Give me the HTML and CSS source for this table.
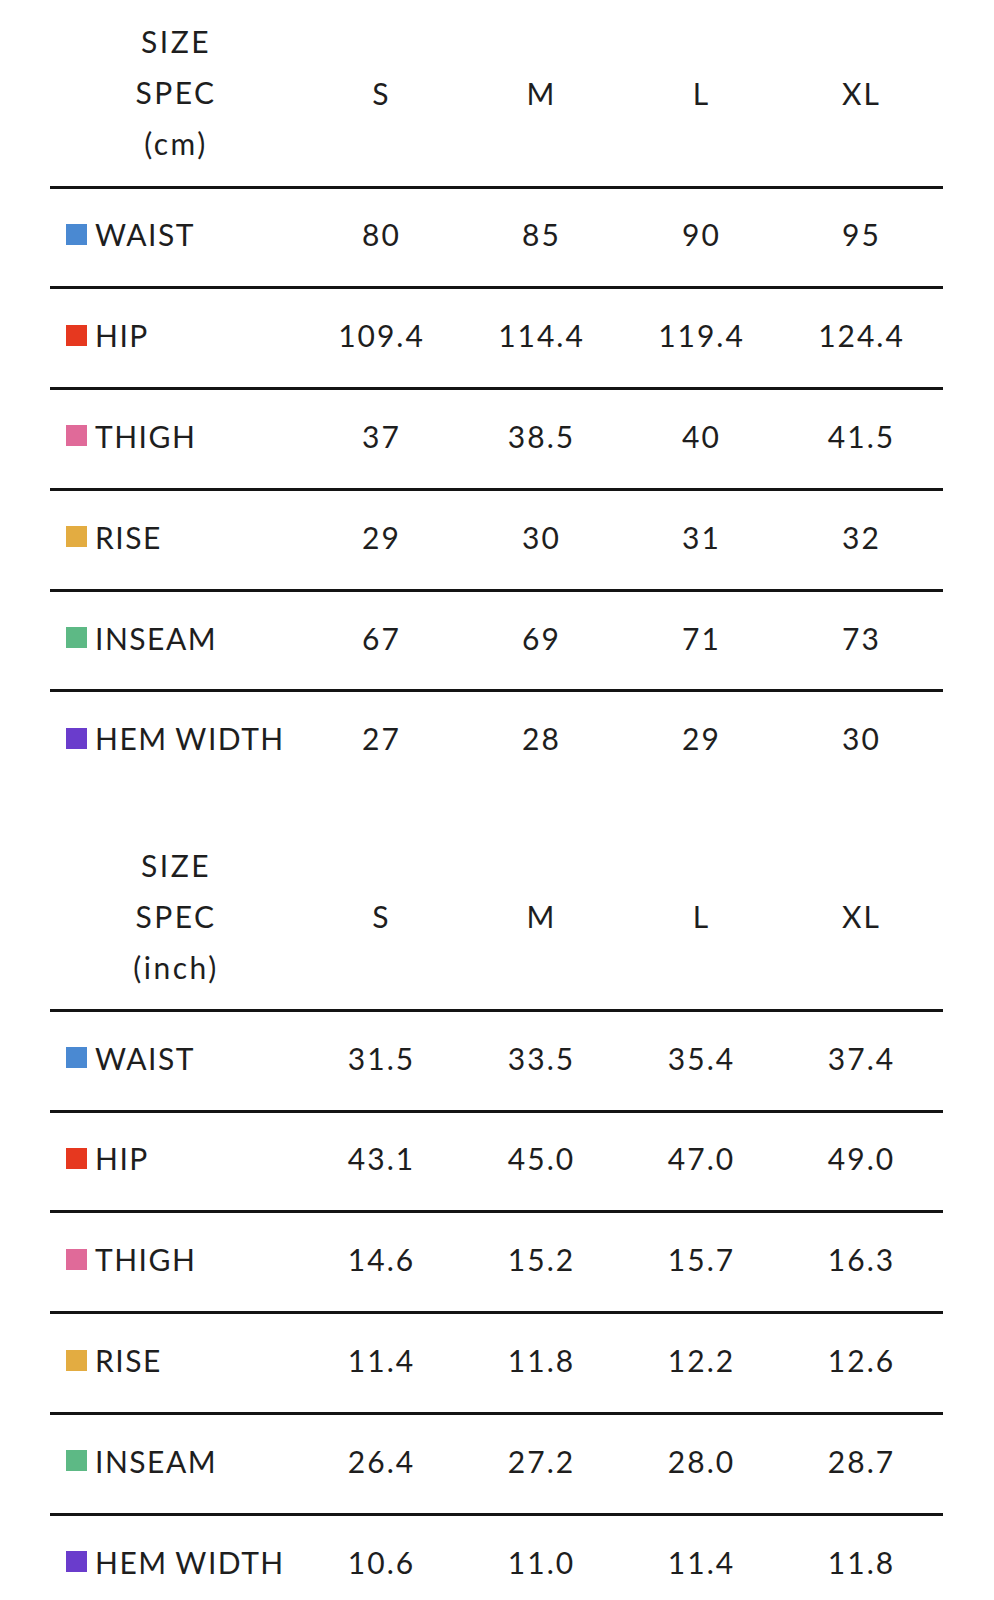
FILE: index.html
```html
<!DOCTYPE html>
<html lang="en">
<head>
<meta charset="utf-8">
<title>Size Spec</title>
<link rel="stylesheet" href="styles.css">
</head>
<body>
<div class="page">
  <section class="spec">
    <div class="head">
      <div class="label-head">SIZE<br>SPEC<br>(cm)</div>
      <div class="cell">S</div>
      <div class="cell">M</div>
      <div class="cell">L</div>
      <div class="cell">XL</div>
    </div>
    <div class="row"><div class="label"><span class="sw blue"></span>WAIST</div><div class="cell">80</div><div class="cell">85</div><div class="cell">90</div><div class="cell">95</div></div>
    <div class="row"><div class="label"><span class="sw red"></span>HIP</div><div class="cell">109.4</div><div class="cell">114.4</div><div class="cell">119.4</div><div class="cell">124.4</div></div>
    <div class="row"><div class="label"><span class="sw pink"></span>THIGH</div><div class="cell">37</div><div class="cell">38.5</div><div class="cell">40</div><div class="cell">41.5</div></div>
    <div class="row"><div class="label"><span class="sw yellow"></span>RISE</div><div class="cell">29</div><div class="cell">30</div><div class="cell">31</div><div class="cell">32</div></div>
    <div class="row"><div class="label"><span class="sw green"></span>INSEAM</div><div class="cell">67</div><div class="cell">69</div><div class="cell">71</div><div class="cell">73</div></div>
    <div class="row"><div class="label"><span class="sw purple"></span>HEM WIDTH</div><div class="cell">27</div><div class="cell">28</div><div class="cell">29</div><div class="cell">30</div></div>
  </section>

  <section class="spec second">
    <div class="head">
      <div class="label-head">SIZE<br>SPEC<br>(inch)</div>
      <div class="cell">S</div>
      <div class="cell">M</div>
      <div class="cell">L</div>
      <div class="cell">XL</div>
    </div>
    <div class="row"><div class="label"><span class="sw blue"></span>WAIST</div><div class="cell">31.5</div><div class="cell">33.5</div><div class="cell">35.4</div><div class="cell">37.4</div></div>
    <div class="row"><div class="label"><span class="sw red"></span>HIP</div><div class="cell">43.1</div><div class="cell">45.0</div><div class="cell">47.0</div><div class="cell">49.0</div></div>
    <div class="row"><div class="label"><span class="sw pink"></span>THIGH</div><div class="cell">14.6</div><div class="cell">15.2</div><div class="cell">15.7</div><div class="cell">16.3</div></div>
    <div class="row"><div class="label"><span class="sw yellow"></span>RISE</div><div class="cell">11.4</div><div class="cell">11.8</div><div class="cell">12.2</div><div class="cell">12.6</div></div>
    <div class="row"><div class="label"><span class="sw green"></span>INSEAM</div><div class="cell">26.4</div><div class="cell">27.2</div><div class="cell">28.0</div><div class="cell">28.7</div></div>
    <div class="row"><div class="label"><span class="sw purple"></span>HEM WIDTH</div><div class="cell">10.6</div><div class="cell">11.0</div><div class="cell">11.4</div><div class="cell">11.8</div></div>
  </section>
</div>
</body>
</html>
```

FILE: styles.css
```css
html, body {
  margin: 0;
  padding: 0;
  background: #ffffff;
}

body {
  font-family: "Lato", "Open Sans", sans-serif;
  font-size: 30px;
  color: #1e1e1e;
  letter-spacing: 2px;
}

.page {
  padding-left: 50px;
}

.spec {
  width: 893px;
}

.second {
  margin-top: 33px;
}

.head,
.row {
  display: grid;
  grid-template-columns: 251px repeat(4, 160px);
  align-items: center;
}

.head {
  height: 185.5px;
}

.label-head {
  text-align: center;
  line-height: 51px;
  letter-spacing: 2.5px;
  padding-left: 1px;
}

.row {
  box-sizing: border-box;
  height: 100.8px;
  border-top: 3px solid #141414;
  padding-bottom: 6px;
}

.cell {
  text-align: center;
  line-height: 40px;
  padding-left: 1px;
}

.label {
  display: flex;
  align-items: center;
  padding-left: 16px;
  line-height: 40px;
  white-space: nowrap;
  letter-spacing: 1.5px;
  word-spacing: -1px;
}

.sw {
  display: inline-block;
  width: 21px;
  height: 21px;
  margin-right: 8px;
  flex: none;
}

.blue { background: #4a89d2; }
.red { background: #e6381f; }
.pink { background: #e06a99; }
.yellow { background: #e3ac41; }
.green { background: #5db985; }
.purple { background: #6a3ccc; }
```
